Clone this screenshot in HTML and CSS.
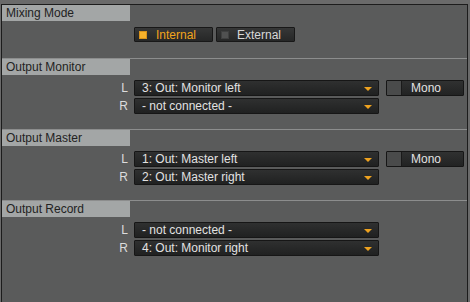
FILE: index.html
```html
<!DOCTYPE html>
<html>
<head>
<meta charset="utf-8">
<link rel="stylesheet" href="styles.css">
</head>
<body>
<div class="panel">
  <section class="sec sec-mix">
    <div class="hdr">Mixing Mode</div>
    <div class="modes">
      <div class="btn active"><span class="sq"></span><span>Internal</span></div>
      <div class="btn"><span class="sq"></span><span>External</span></div>
    </div>
  </section>
  <section class="sec">
    <div class="hdr">Output Monitor</div>
    <div class="rows">
      <div class="row"><span class="lbl">L</span><div class="dd"><span>3: Out: Monitor left</span><i class="arr"></i></div><div class="mono"><span class="box"></span><span class="mtxt">Mono</span></div></div>
      <div class="row"><span class="lbl">R</span><div class="dd"><span>- not connected -</span><i class="arr"></i></div></div>
    </div>
  </section>
  <section class="sec">
    <div class="hdr">Output Master</div>
    <div class="rows">
      <div class="row"><span class="lbl">L</span><div class="dd"><span>1: Out: Master left</span><i class="arr"></i></div><div class="mono"><span class="box"></span><span class="mtxt">Mono</span></div></div>
      <div class="row"><span class="lbl">R</span><div class="dd"><span>2: Out: Master right</span><i class="arr"></i></div></div>
    </div>
  </section>
  <section class="sec sec-last">
    <div class="hdr">Output Record</div>
    <div class="rows">
      <div class="row"><span class="lbl">L</span><div class="dd"><span>- not connected -</span><i class="arr"></i></div></div>
      <div class="row"><span class="lbl">R</span><div class="dd"><span>4: Out: Monitor right</span><i class="arr"></i></div></div>
    </div>
  </section>
</div>
</body>
</html>
```

FILE: styles.css
```css
html, body {
  margin: 0;
  padding: 0;
  background: #6a6a6a;
  width: 470px;
  height: 302px;
  overflow: hidden;
  font-family: "Liberation Sans", Arial, sans-serif;
  font-size: 12px;
}
.panel {
  margin: 4px 0 0 1px;
  width: 465px;
  height: 297px;
  background: #5a5b5b;
  border-top: 1px solid #1c1c1c;
  border-left: 1px solid #1c1c1c;
  border-right: 1px solid #1c1c1c;
}
.sec {
  height: 70px;
  border-bottom: 1px solid #8c8d8d;
  box-sizing: content-box;
}
.sec-mix { height: 53px; }
.sec-last { border-bottom: none; height: 101px; }
.hdr {
  width: 128px;
  height: 16px;
  line-height: 16px;
  background: #a3a6a6;
  color: #222;
  padding-left: 4px;
  box-sizing: border-box;
}
.modes {
  display: flex;
  gap: 3px;
  margin: 6px 0 0 132px;
}
.btn {
  width: 79px;
  height: 15px;
  box-sizing: border-box;
  border: 1px solid #181818;
  border-radius: 1px;
  background: linear-gradient(#363737, #262727);
  color: #d8d8d8;
  display: flex;
  align-items: center;
  padding-left: 4px;
  gap: 8px;
}
.btn .sq {
  width: 8px;
  height: 8px;
  background: #505151;
  box-shadow: inset 0 0 0 1px #3f4040;
}
.btn.active { color: #f2a51d; }
.btn.active .sq {
  background: #f6b12a;
  box-shadow: inset 0 0 0 1px #d8921a;
}
.btn.active { gap: 9px; }
.rows {
  display: flex;
  flex-direction: column;
  gap: 2px;
  margin-top: 5px;
}
.row {
  display: flex;
  align-items: center;
  height: 16px;
}
.lbl {
  width: 126px;
  text-align: right;
  color: #dcdcdc;
  margin-right: 6px;
}
.dd {
  width: 245px;
  height: 16px;
  box-sizing: border-box;
  border: 1px solid #161616;
  border-radius: 1px;
  background: linear-gradient(#2f3030, #202121);
  color: #e2e2e2;
  display: flex;
  align-items: center;
  justify-content: space-between;
  padding: 0 6px 0 7px;
}
.arr {
  width: 0;
  height: 0;
  border-left: 4px solid transparent;
  border-right: 4px solid transparent;
  border-top: 4px solid #eea21f;
  margin-top: 1px;
}
.mono {
  margin-left: 7px;
  width: 78px;
  height: 16px;
  box-sizing: border-box;
  border: 1px solid #161616;
  border-radius: 1px;
  background: linear-gradient(#303131, #222323);
  display: flex;
  align-items: center;
  color: #e2e2e2;
}
.mono .box {
  width: 14px;
  height: 14px;
  background: #4a4b4b;
  border-right: 1px solid #1a1a1a;
}
.mtxt {
  margin-left: 9px;
}
```
